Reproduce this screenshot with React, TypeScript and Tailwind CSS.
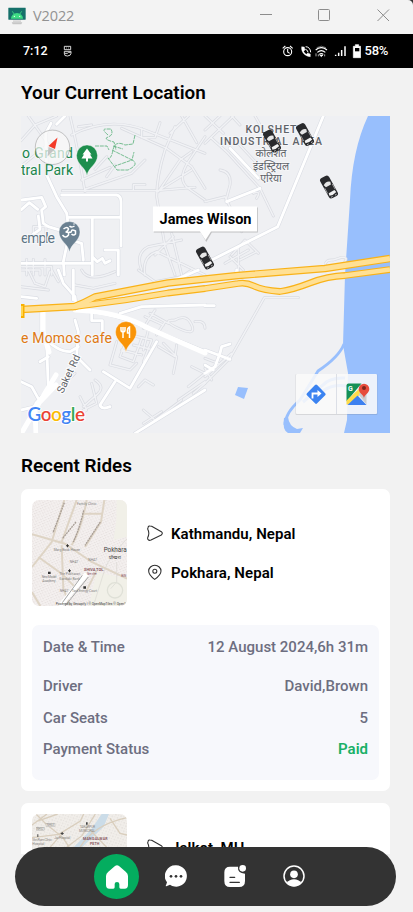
import React from "react";

/* ---------- window chrome and status bar ---------- */

function TitleBar() {
  return (
    <div className="bg-[#333]">
      <div className="flex h-[34px] items-center rounded-tr-[5px] bg-[#f3f3f3] pl-2 pr-[23px]">
        <svg className="-mt-0.5 h-[18px] w-[18px]" viewBox="0 0 54 54">
          <rect x="1" y="2" width="52" height="36" rx="1" fill="#15706a" />
          <path d="M9 35a18 17 0 0 1 36 0z" fill="#3ddc84" />
          <path d="m13 13 6 9m22-9-6 9" stroke="#3ddc84" strokeWidth="2.5" />
          <circle cx="19" cy="28" r="2" fill="#fff" />
          <circle cx="35" cy="28" r="2" fill="#fff" />
          <path d="M15 40h24v6H15z" fill="#d5d5d5" />
          <path d="M11 46h32l-3 6H14z" fill="#c6c6c6" />
        </svg>
        <span className="ml-[7px] mt-[-2px] font-['Open_Sans','Noto_Sans',sans-serif] text-[14.5px] tracking-[-0.1px] text-[#929292]">V2022</span>
        <svg className="ml-auto h-4 w-[130px]" viewBox="0 0 130 16" fill="none" stroke="#8c8c8c">
          <path d="M0 5.500h12" />
          <rect x="58.500" y="0.500" width="11" height="11" rx="1" />
          <path d="m117.500 0.500 11.500 11.500m0-11.500-11.500 11.500" />
        </svg>
      </div>
    </div>
  );
}

function StatusBar() {
  return (
    <div className="flex h-[34px] items-center bg-black pl-[23px] pr-[25px] text-[13px] font-medium text-white">
      <span className="text-[12.5px]">7:12</span>
      <svg className="ml-[15px] h-3 w-[9px]" viewBox="0 0 27 36" fill="none" stroke="#e6e6e6" strokeWidth="2.800">
        <path d="M4 14V4h19v10zM4 19h20v6q0 7-10.500 8T4 25z" />
        <path d="M9 9h2m5 0h2M4 25h9l4-3h6" />
      </svg>
      <svg className="ml-auto h-[17px] w-[80px]" viewBox="838 128 240 51" fill="none" stroke="#fff">
        <circle cx="858" cy="154" r="12" strokeWidth="3.300" />
        <path d="M858 146v9l6 4M843 144l8-7m14 0 8 7" strokeWidth="3.300" />
        <path d="M900 139c-3 14 9 29 26 30v-8l-8-3-4 4q-6-3-8-9l4-4-2-9z" fill="#fff" strokeWidth="1" />
        <path d="M911 147a10 10 0 0 1 8 9M912 139q14 1 15 17" strokeWidth="3" />
        <path d="M942 149q17-14 34 0M947 156q12-10 24 0" strokeWidth="3.500" />
        <path d="M945 142q14-9 28 0" strokeWidth="2" stroke="#999" />
        <path d="M953 162q6-5 12 0" strokeWidth="3.500" />
        <path d="m959 169-5-5h10zM943 159v9m7-6v6m19-6v6" fill="#fff" strokeWidth="2" />
        <path d="M1002 167v-4m9 4v-10m9 10v-18m10 18v-29" strokeWidth="4.500" />
        <path d="M1055 138h6v-5h10v5h6v34h-22z" fill="#fff" strokeWidth="2" />
        <path d="M1060 143h13v10h-13z" fill="#000" stroke="none" />
      </svg>
      <span className="ml-[4px] tracking-[-0.3px]">58%</span>
    </div>
  );
}

/* ---------- live map ---------- */

type Quad = { at: string; main: string; minor: string };

// Road networks of the four map tiles, drawn at three units per pixel.
const quads: Quad[] = [
  {
    at: "translate(15 110) scale(.33333)",
    main: "M150 18l-25 25M108 40L92 70 95 195 125 260 155 310 163 370 145 455 148 495M160 322H318M232 322V495M165 390L200 400 205 450M140 255H305Q318 258 318 275V408M18 460H230M270 420H310V495M232 440l15 15 15-10 8 15 15-8M20 270L80 262 92 290 80 300 85 340 100 350 150 365M18 300l25-22 25 20M70 318l5 40-25 18",
    minor:
      "M165 18Q190 120 210 245M18 92L60 45 125 18M40 18l60 85-75 60M170 75Q280 18 390 60L570 130M190 50L230 45M142 242H420L540 232M390 150L350 190 210 238M240 178l35-38M200 210l85-38M320 55L455 115 530 170 570 235M480 50L450 120Q425 200 425 260L450 410 480 495M430 245L495 150 530 125M570 80L520 155Q485 210 520 235L570 270M500 18l45 80M520 18l-55 52M380 55v28h40l15-45M355 242v-18h35M425 245L530 180M275 200l25-35M380 480Q360 430 400 410L500 390M390 495Q380 440 425 425L570 495M420 435l55-55M470 370l30 125M20 470h90v25M20 480h55v15M35 448v47M55 448v47M90 448v47M55 375v-25h38v45h-45zM18 395l45-8",
  },
  {
    at: "translate(205 110) scale(.33333)",
    main: "M355 18L218 350 20 450M75 115L160 205M165 235L65 275",
    minor:
      "M0 100L85 18M0 60L45 18M20 85L70 130M60 120L165 235 205 318M90 90L160 165M45 180q35 5 30 45l-12 45 40 70M145 250q25-10 10 15M0 275L60 260 110 365M75 300L145 345M60 345L130 305M80 435L120 390 160 430M100 410L100 490M60 460L130 420M75 440l40 40M105 450l50-25M0 18L55 70M105 45L80 18M150 18l20 35M360 468q0-20 25-18l25-8q20 0 10 12",
  },
  {
    at: "translate(15 270) scale(.33333)",
    main: "M130 0L145 40 180 80 185 120M175 0V90M185 120Q310 130 400 175L570 245M315 130L380 110 570 105M80 110V190L95 220 100 360 62 400 65 495M80 195Q125 245 165 245L190 230M180 150L190 185 185 260 225 300M470 35L550 0M425 215L345 355 265 305M300 335L255 405Q260 420 285 410M360 490L570 360M18 335L50 350 75 395M18 420L60 410M100 260l-25 15M230 130v22h32v30M65 85L18 80",
    minor:
      "M40 0l20 40 30 10 15-45M15 50L100 60M110 0l20 35M180 45L235 55 300 40M200 0q20 40 100 5M370 0l50 35 80-15 30-20M305 215L285 285 345 300 365 280M345 180l-30 80 40 15 25-70M320 240l60 15M345 195l65 15-25 65M400 180l-15 60M355 225l50 12M390 140l55 25M405 130l55 30M420 120l-35 55M450 155l-25 40M480 150q35-20 50 15t-40 10-10-25M540 155q30-5 30 20M445 220l40 40-10 50M430 230l50 30 5-35M530 290l40 20M520 350L570 310M535 370l35-30M490 390L570 335M230 340l15 60-40 20M240 330q30 20 10 40l-45 40M195 380l20 40-40 25M385 420L420 450 500 390M385 460l55-35M370 350l20-20 25 15M180 310l-30 30",
  },
  {
    at: "translate(205 270) scale(.33333)",
    main: "M0 240L75 268M75 222L50 230 45 250 30 290 0 310M0 285l25 15M95 0V15M0 107h28",
    minor:
      "M280 83H178L75 265 0 340M0 320L80 250M0 265l40 15M0 295L20 330",
  },
];

function Car({ x, y }: { x: number; y: number }) {
  return (
    <g transform={`translate(${x} ${y}) rotate(-29)`}>
      <rect x="-5" y="-11.500" width="10" height="23" rx="2.800" fill="#292a2d" />
      <path d="M-3.800-4q3.800-3 7.600 0l-1 2.800h-5.600z" fill="#e6e6e6" />
      <path d="M-3.200 5.300h6.400l.7 2.600q-3.800 1.500-7.800 0z" fill="#f2f2f2" />
      <path d="M-4.300-1v6M4.300-1v6" stroke="#bbb" strokeWidth=".7" />
      <path d="M-3 10h1.500M1.500 10H3" stroke="#eee" strokeWidth=".8" />
    </g>
  );
}

function Pin({ x, y, color, children }: { x: number; y: number; color: string; children: React.ReactNode }) {
  return (
    <g transform={`translate(${x} ${y})`}>
      <path d="M0 20C-1 12-10.500 9-10.500 0a10.500 10.500 0 0 1 21 0C10.500 9 1 12 0 20z" fill={color} stroke="#fff" strokeOpacity=".5" strokeWidth=".7" />
      {children}
    </g>
  );
}

const upperHighway = "M21 309.500L75 306.500Q84 303 95 297L168 283 205 279 238 275.500 325 268.500 390 258.500";
const lowerHighway = "M72 307L125 300 168 293 205 288.500 238 283.500Q246 282 254 286T280 291.500Q292 290 310 283T345 275.500L390 269.500";

function LiveMap() {
  return (
    <svg className="block h-[317px] w-[369px] shrink-0" viewBox="21 116 369 317" fontFamily="Roboto, 'Noto Sans', sans-serif">
      <rect x="21" y="116" width="369" height="317" fill="#eff0f3" />
      <g fill="#98bffd">
        <path d="M368 116Q352 150 350 200L345 275 343 345 348 373 347 420 344 433H390V116z" />
        <path d="M238 387l10 1-4 11-9-4z" />
        <path d="M284 418q-2 12 4 15h12l3-5-6 1q-8-3-9-12z" />
      </g>
      <path d="M344 344Q339 357 318 371L300 400Q285 413 285 425" fill="none" stroke="#98bffd" strokeWidth="2.800" />
      <path d="M345 378q-15-1-22 7l-20 17M347 386q-15-2-24 5" fill="none" stroke="#98bffd" strokeWidth="3" />
      <g fill="none" strokeLinecap="round" strokeLinejoin="round">
        {quads.map((q) => (
          <g key={q.at} transform={q.at}>
            <path d={q.minor} stroke="#d9dbe1" strokeWidth="8.500" />
            <path d={q.main} stroke="#dadde4" strokeWidth="12" />
          </g>
        ))}
        {quads.map((q) => (
          <g key={q.at} transform={q.at}>
            <path d={q.minor} stroke="#f1f2f5" strokeWidth="4.500" />
            <path d={q.main} stroke="#fff" strokeWidth="8.500" />
          </g>
        ))}
        <path d="M43 308V332L49 352M21 434L42 398 56 375M36 433l-1-26 21-22M75 310Q120 312 148 328L205 353" stroke="#fff" strokeWidth="5" />
      </g>
      <g fill="none" strokeLinejoin="round">
        <path d={upperHighway} stroke="#f9b218" strokeWidth="7.500" />
        <path d={lowerHighway} stroke="#f9b218" strokeWidth="6.800" />
        <path d={upperHighway} stroke="#ffe094" strokeWidth="5.200" />
        <path d={lowerHighway} stroke="#ffe094" strokeWidth="4.400" />
        <path d="M22.500 304v14" stroke="#f9b000" strokeWidth="4" />
        <path d="M22 306v10" stroke="#ffd54f" strokeWidth="2" />
      </g>
      <path d="M95 146h12l2 4m-1-15q-7-6-2-6h5q3 6-3 8t6 5l2 8m19-15-2 9-8 1q-10-5-12 5t-5 8l9 12h11q12-6 4-10l2-8m-22-2 20 10-17 6m-2-20 10 3" fill="none" stroke="#58b078" strokeWidth=".8" strokeDasharray="4 .8" />

      <g fill="#20864c" fontSize="14" stroke="#f5f6f8" strokeWidth="2.500" paintOrder="stroke">
        <text x="22" y="158" textLength="51">o Grand</text>
        <text x="21" y="175" textLength="52">tral Park</text>
      </g>
      <text x="21" y="243" fontSize="14" fill="#5d7484" stroke="#f5f6f8" strokeWidth="2.500" paintOrder="stroke" textLength="34">emple</text>
      <text x="21" y="343" fontSize="14" fill="#df7914" stroke="#f5f6f8" strokeWidth="2.500" paintOrder="stroke" textLength="91">e Momos cafe</text>
      <text transform="translate(63 394) rotate(-65)" fontSize="10.500" fill="#5f6368" stroke="#fff" strokeWidth="2" paintOrder="stroke">Saket Rd</text>
      <g fontSize="10.500" fill="#5f6368" stroke="#f5f6f8" strokeWidth="2" paintOrder="stroke">
        <g fontWeight="500">
          <text x="245.500" y="132.500" textLength="51">KOLSHET</text>
          <text x="220" y="145" textLength="102">INDUSTRIAL AREA</text>
        </g>
        <g textAnchor="middle" fontSize="10.500">
          <text x="271" y="157">कोलशेत</text>
          <text x="271" y="169.500">इंडस्ट्रियल</text>
          <text x="271" y="182">एरिया</text>
        </g>
      </g>

      <Pin x={87} y={155.500} color="#1e8e4d">
        <path d="M0-7L4.500-1H3L5.500 3H1v3h-2V3h-4.500L-3-1h-1.500z" fill="#fff" />
      </Pin>
      <Pin x={69.500} y={232} color="#6a8091">
        <path d="M-6-3q4-3 5 0-1 3-3 3 4 0 3 3-3 4-6 0M-1 0q3 1 3-1t4 0v3q-2 2-4 0M0-6q2 2 5 0m-1-2h1" fill="none" stroke="#fff" strokeWidth="1.500" />
      </Pin>
      <Pin x={126} y={332} color="#f99408">
        <path d="M-5-5v3q0 2 2 2t2-2v-3M-3-5V6M3.500 6v-11q-2.500 1-2 6h2" fill="none" stroke="#fff" strokeWidth="1.500" />
      </Pin>

      <circle cx="52.500" cy="147.300" r="17" fill="#f8f8f8" fillOpacity=".72" />
      <circle cx="52.500" cy="147.300" r="17.200" fill="none" stroke="#999" strokeOpacity=".55" />
      <path d="M57.500 137.500l-9 8.500 6.500 3z" fill="#f33a28" />
      <path d="M48.500 147l6 2.500-7 7z" fill="#c4c4c4" />

      <Car x={272} y={141} />
      <Car x={305} y={134.500} />
      <Car x={329} y={187} />
      <Car x={205} y={258} />

      <path d="M153 206.500H257V231.500H211L205.500 241 200 231.500H153z" fill="#999" opacity=".55" transform="translate(0.800 1)" />
      <path d="M153 206.500H257V231.500H211L205.500 240 200 231.500H153z" fill="#fff" />
      <text x="159.500" y="224" fontSize="14.500" fontWeight="700" textLength="92">James Wilson</text>

      <rect x="295.500" y="374" width="82" height="41" rx="1" fill="#555" opacity=".16" />
      <rect x="296" y="374" width="81" height="40" rx="1" fill="#fff" fillOpacity=".84" />
      <path d="M336.500 374v40" stroke="#dcdfe6" />
      <rect x="308.800" y="387" width="14.400" height="14.400" rx="1.500" transform="rotate(45 316 394.300)" fill="#3b83f1" />
      <path d="M312.500 398.500v-5h7" fill="none" stroke="#fff" strokeWidth="1.800" />
      <path d="M317.500 390l4 3.500-4 3.500z" fill="#fff" />
      <g transform="translate(346.500 383.500)">
        <path d="M2 0h13L0 18V2q0-2 2-2z" fill="#159157" />
        <path d="M0 17L14 4l4 3L3 21H0z" fill="#ffdc4b" />
        <path d="M1 21.500L11 12l9 9.500z" fill="#3c80f0" />
        <path d="M12 11l8-8v18z" fill="#c9ccd1" />
        <path d="M17.500 15c0-4-5.300-5-5.300-9.500a5.300 5.300 0 0 1 10.600 0C22.800 10 17.500 11 17.500 15z" fill="#e64c3d" />
        <circle cx="17.500" cy="4.500" r="2" fill="#7c251d" />
        <text x="1.500" y="7.500" fontSize="7" fontWeight="700" fill="#fff">G</text>
      </g>

      <text x="27.500" y="421" fontFamily="Lato, sans-serif" fontWeight="600" fontSize="19" textLength="57.500" stroke="#fff" strokeWidth="2" paintOrder="stroke">
        <tspan fill="#4285f4">G</tspan>
        <tspan fill="#ea4335">o</tspan>
        <tspan fill="#fbbc05">o</tspan>
        <tspan fill="#4285f4">g</tspan>
        <tspan fill="#34a853">l</tspan>
        <tspan fill="#ea4335">e</tspan>
      </text>
    </svg>
  );
}

/* ---------- ride thumbnails ---------- */

function PokharaThumb() {
  return (
    <svg className="h-[106px] w-[95px] shrink-0 rounded-[7px]" viewBox="21 14 285 318" fontFamily="Roboto, 'Noto Sans', sans-serif">
      <defs>
        <pattern id="blocks" width="11" height="10" patternUnits="userSpaceOnUse" patternTransform="rotate(20)">
          <path d="M0 0h5v3H0zM6 5h3v4H6z" fill="#e6e0de" />
        </pattern>
      </defs>
      <path d="M21 14h285v318H21z" fill="#f4f0ef" />
      <path d="M21 14h285v318H21z" fill="url(#blocks)" />
      <path d="M275 14h31v110l-40 10 8-60zM215 230l91 20v82h-115z" fill="#f1f0e8" />
      <g fill="none" stroke="#ded4c5" strokeWidth="6">
        <path d="M21 117L120 145 200 200 306 250M118 14L80 140 21 215M155 14L110 140M185 14Q170 100 140 150M238 14L228 80 180 155M172 55h60M40 185L110 235 160 285M110 150l5 130 20 50M21 290l25 42M215 225l-30 60" />
      </g>
      <g stroke="#a89e96" strokeWidth="4" strokeDasharray="6 2" fill="none">
        <path d="M118 22L84 112M153 80L112 130M176 45Q165 95 145 140M226 80L180 150" />
      </g>
      <g stroke="#fff" strokeWidth="14"><path d="M185 235L105 332" /></g>
      <path d="M172 240L112 322M190 245L120 332" stroke="#a5a5a5" strokeWidth="3" />
      <path d="M306 130Q250 190 240 220L205 332M275 200v60l-18 20" fill="none" stroke="#d9d8d2" strokeWidth="2" />
      <circle cx="270" cy="285" r="23" fill="none" stroke="#dfe0d7" strokeWidth="4" />
      <g fill="#81807e" fontSize="10">
        <text x="156" y="28" textLength="58">Family Clinic</text>
        <text x="86" y="168">Marg Book House</text>
        <text x="50" y="248" textLength="44">New Model</text>
        <text x="52" y="261" textLength="40">Academy</text>
        <text x="103" y="240" textLength="62">The Pokharan</text>
        <text x="103" y="253" textLength="62">Gandaki Bank</text>
        <text x="104" y="291" textLength="26">NH47</text>
        <text x="140" y="290" textLength="76">Tara Energy Court</text>
        <text x="134" y="204">NH47</text>
        <text x="190" y="198">NH47</text>
      </g>
      <g fill="#333">
        <path d="M126 147h3v9h-3zM123 150h9v3h-9zM132 222h3v9h-3zM129 225h9v3h-9zM69 229h8v7h-8zM175 273h8v7h-8z" />
      </g>
      <text x="177" y="227" fontSize="12" fontWeight="600" fill="#83505a" textLength="58">SHIVA TOL</text>
      <text x="186" y="240" fontSize="9" fill="#83505a">शिव टोल</text>
      <text x="289" y="244" fontSize="9" fill="#83505a">BIN</text>
      <text x="236" y="169" fontSize="19" fill="#444" textLength="69">Pokhara</text>
      <text x="251" y="190" fontSize="16" fill="#444">पोखरा</text>
      <text x="92" y="328" fontSize="9.500" fill="#333" textLength="211">Powered by Geoapify | © OpenMapTiles © OpenS</text>
    </svg>
  );
}

function JalkotThumb() {
  return (
    <svg className="h-[106px] w-[95px] shrink-0 rounded-[7px]" viewBox="96 57 285 318" fontFamily="Roboto, sans-serif">
      <defs>
        <pattern id="plots" width="12" height="11" patternUnits="userSpaceOnUse" patternTransform="rotate(-25)">
          <path d="M0 1h5v3H0zM7 6h3v3H7z" fill="#e4dfdb" />
        </pattern>
      </defs>
      <path d="M96 57h285v318H96z" fill="#f1eeea" />
      <path d="M96 57h285v318H96z" fill="url(#plots)" />
      <path d="M305 57h22l-16 38-65 62h-25l53-54z" fill="#cbdce8" />
      <path d="M108 57l30 30 50 40 20 30M96 90l45-33M108 80l65-23M96 128l80-10 65-40 10-21M200 157l46-35 40-65M240 157Q280 90 381 68M330 70l30 45 21 5M270 105l50 52M150 157l40-45" fill="none" stroke="#d9cebd" strokeWidth="4" />
      <g fontSize="10" fill="#8a8783">
        <rect x="109" y="97" width="25" height="9" fill="#ece9e4" stroke="#999" />
        <rect x="138" y="86" width="27" height="9" fill="#ece9e4" stroke="#999" />
        <text x="110" y="105" fontSize="8">NH52</text>
        <text x="141" y="94" fontSize="8">NH63</text>
        <text x="239" y="98" textLength="46">TARAKPUR</text>
        <text x="237" y="111" textLength="48">MUNICIPAL</text>
        <text x="97" y="137" textLength="58">Shri Ram Clinic</text>
        <text x="97" y="150" textLength="36">Hospital</text>
        <text x="163" y="131" textLength="48">Jai Hospital</text>
      </g>
      <path d="M185 111h3v9h-3zM182 114h9v3h-9zM112 118h3v8h-3zM258 82h5v7h-5z" fill="#444" />
      <g fontSize="11" fontWeight="600" fill="#83505a">
        <text x="249" y="136" textLength="74">MANGALWAR</text>
        <text x="270" y="150">PETH</text>
      </g>
    </svg>
  );
}

/* ---------- ride list ---------- */

type Detail = { label: string; value: string; row: string };
type Ride = { from: string; to?: string; thumb: React.ReactNode; details?: Detail[] };

const details: Detail[] = [
  { label: "Date & Time", value: "12 August 2024,6h 31m", row: "h-[43px]" },
  { label: "Driver", value: "David,Brown", row: "h-[35px]" },
  { label: "Car Seats", value: "5", row: "h-[28px]" },
  { label: "Payment Status", value: "Paid", row: "h-[35px]" },
];

function RideCard({ from, to, thumb, details: rows }: Ride) {
  return (
    <article className="h-[302px] shrink-0 rounded-[7px] bg-white p-[11px]">
      <div className="flex gap-5">
        {thumb}
        <div className="flex flex-col gap-[19px] pt-6 text-[15px] font-semibold leading-5 tracking-[0.06px] text-black">
          <div className="flex items-center gap-2">
            <svg className="-mt-0.5 h-4 w-4" viewBox="20 31 48 48" fill="none" stroke="#303030" strokeWidth="3.200" strokeLinejoin="round">
              <path d="M29 34Q24 33 23 39L22 43Q29 56 22 69L22 73Q25 79 32 76L63 61Q69 56 63 51L34 35Q31 34 29 34z" />
            </svg>
            <span>{from}</span>
          </div>
          {to && (
            <div className="flex items-center gap-2">
              <svg className="-mt-0.5 h-4 w-4" viewBox="20 146 48 48" fill="none" stroke="#303030" strokeWidth="3.200">
                <path d="M43 192Q25 179 25 167a18.500 17 0 0 1 37 0Q62 179 43 192z" />
                <circle cx="43.500" cy="168" r="6" />
              </svg>
              <span>{to}</span>
            </div>
          )}
        </div>
      </div>
      {rows && (
        <dl className="mt-[19px] h-[155px] rounded-[7px] bg-[#f7f8fc] px-[11px] pt-px text-[15px] font-medium text-[#6d6e80]">
          {rows.map((d) => (
            <div key={d.label} className={`flex items-center justify-between ${d.row}`}>
              <dt>{d.label}</dt>
              <dd className={d.value === "Paid" ? "font-semibold text-[#19b067]" : ""}>{d.value}</dd>
            </div>
          ))}
        </dl>
      )}
    </article>
  );
}

/* ---------- bottom navigation ---------- */

function BottomNav() {
  return (
    <nav className="absolute left-[15px] top-[847px] flex h-[59px] w-[381px] items-center rounded-full bg-[#333]">
      <div className="ml-[79px] flex h-[45px] w-[45px] items-center justify-center rounded-full bg-[#04ad5f]">
        <svg className="h-6 w-6" viewBox="0 0 72 72" fill="#fff">
          <path d="M30 3q6-5 12 0l20 17q7 5 7 13v27q0 11-10 11H47q-4 0-4-4V57q0-6-7-6t-7 6v10q0 4-4 4H13Q3 71 3 60V33q0-8 7-13z" />
        </svg>
      </div>
      <svg className="-mt-px ml-[25.5px] h-[22px] w-[22px]" viewBox="0 0 66 66">
        <path d="M33 1a32 32 0 1 1-18 58l-11 5q-3 0-1-3l3-9A32 32 0 0 1 33 1z" fill="#fff" />
        <g fill="#333"><circle cx="18" cy="34" r="4" /><circle cx="33" cy="34" r="4" /><circle cx="48" cy="34" r="4" /></g>
      </svg>
      <svg className="-mt-px ml-[37.5px] h-[22px] w-[22px]" viewBox="0 0 66 66">
        <path d="M18 5h24q-2 19 21 21v22q0 18-18 18H18Q1 66 1 48V22Q1 5 18 5z" fill="#fff" />
        <circle cx="56" cy="10" r="10" fill="#fff" />
        <path d="M18 37h14M18 52h28" stroke="#333" strokeWidth="4" strokeLinecap="round" />
      </svg>
      <svg className="-mt-px ml-[37px] h-[22px] w-[22px]" viewBox="0 0 66 66">
        <circle cx="33" cy="33" r="30" fill="#333" stroke="#fff" strokeWidth="4.500" />
        <circle cx="33" cy="28" r="11.500" fill="#fff" />
        <path d="M11 54q8-11 22-11t22 11Q46 64 33 64T11 54z" fill="#fff" />
      </svg>
    </nav>
  );
}

export default function App() {
  return (
    <div className="relative h-[912px] w-[413px] overflow-hidden bg-[#f2f2f2] font-[Roboto,'Noto_Sans',sans-serif]">
      <TitleBar />
      <StatusBar />
      <main className="flex h-[786px] flex-col overflow-hidden pl-[21px] pr-[23px]">
        <h1 className="flex h-12 shrink-0 items-center pt-0.5 text-[18.85px] font-semibold text-black">Your Current Location</h1>
        <LiveMap />
        <h2 className="flex h-14 shrink-0 items-center pt-2.5 text-[18.85px] font-semibold text-black">Recent Rides</h2>
        <section className="flex flex-col gap-3">
          <RideCard from="Kathmandu, Nepal" to="Pokhara, Nepal" thumb={<PokharaThumb />} details={details} />
          <RideCard from="Jalkot, MH" thumb={<JalkotThumb />} />
        </section>
      </main>
      <BottomNav />
    </div>
  );
}
